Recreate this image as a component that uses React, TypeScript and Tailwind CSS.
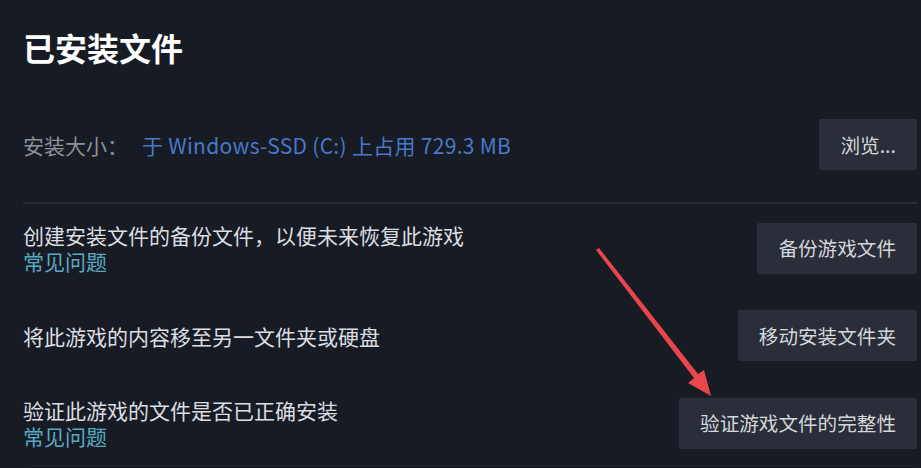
export default function App() {
  const rows = [
    {
      id: 'backup',
      text: '创建安装文件的备份文件，以便未来恢复此游戏',
      faq: true,
      button: '备份游戏文件',
    },
    {
      id: 'move',
      text: '将此游戏的内容移至另一文件夹或硬盘',
      faq: false,
      button: '移动安装文件夹',
    },
    {
      id: 'verify',
      text: '验证此游戏的文件是否已正确安装',
      faq: true,
      button: '验证游戏文件的完整性',
    },
  ];

  return (
    <div
      className="relative w-[921px] h-[468px] overflow-hidden bg-[#171b24] pl-[23px] pr-[4px]"
      style={{ fontFamily: '"Noto Sans CJK SC", "Noto Sans", sans-serif' }}
    >
      {/* Title */}
      <h1 className="pt-[28px] text-[32px] leading-[38px] font-bold text-white">已安装文件</h1>

      {/* Install size */}
      <div className="mt-[53px] flex items-center justify-between">
        <div className="flex items-center text-[21px] leading-[28px]">
          <span className="text-[#8d9198]">安装大小：</span>
          <span className="ml-[14px] tracking-[0.3px] text-[#4a78c9]">于 Windows-SSD (C:) 上占用 729.3 MB</span>
        </div>
        <button className="h-[51px] px-[21px] rounded-[2px] bg-[#2a2e39] text-[19.6px] text-[#d5d7db]">
          浏览...
        </button>
      </div>

      <div className="mt-[32px] h-[2px] bg-[#272c35]" />

      {/* Actions */}
      <div className="mt-[18px] flex flex-col gap-[36px]">
        {rows.map((row) => (
          <div key={row.id} className="flex items-center justify-between">
            <div className="flex flex-col text-[21px] leading-[26px]">
              <div className="text-[#dcdee1]">{row.text}</div>
              {row.faq && <div className="text-[#5aa9c3]">常见问题</div>}
            </div>
            <button className="h-[51px] px-[21px] rounded-[2px] bg-[#2a2e39] text-[19.6px] text-[#d5d7db]">
              {row.button}
            </button>
          </div>
        ))}
      </div>

      <div className="mt-[16px] ml-[6px] h-[1px] bg-[#232831]" />

      {/* Red annotation arrow */}
      <svg
        className="absolute left-0 top-0 pointer-events-none"
        width="921"
        height="468"
        viewBox="0 0 921 468"
      >
        <polygon
          points="596,250 599,248 698,374 704,370 711,396 688,383 694,378"
          fill="#e8464b"
        />
      </svg>
    </div>
  );
}
